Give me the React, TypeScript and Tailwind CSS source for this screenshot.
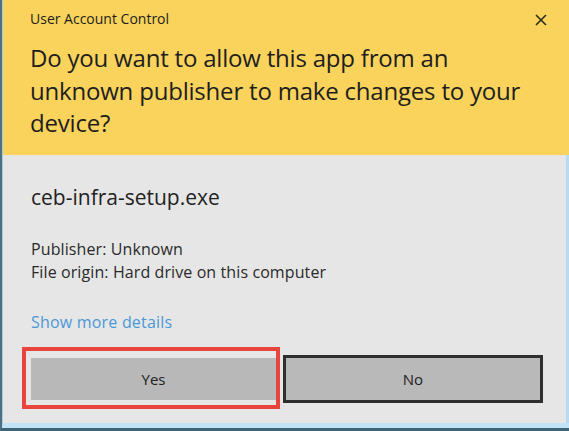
export default function App() {
  return (
    <div className="w-[569px] h-[431px] flex flex-col border-l-2 border-l-[#4d7183] border-b-[3px] border-b-[#3f6475] bg-[#e6e6e6] font-['Open_Sans',sans-serif] text-[#1e1e1e]">
      <div className="flex-1 flex flex-col border-l border-l-[#a8cde6] border-b-[5px] border-b-[#c4e2f6]">
        {/* yellow banner */}
        <div className="h-[155px] shrink-0 bg-[#f9d35b] pl-[27px] pt-[9px] pr-[22px]">
          <div className="flex items-center justify-between h-[20px]">
            <span className="text-[14px] leading-[20px]">User Account Control</span>
            <svg width="12" height="12" viewBox="0 0 12 12" className="mt-[2px]">
              <path d="M1 1L11 11M11 1L1 11" stroke="#2b2b1c" strokeWidth="1.6" />
            </svg>
          </div>
          <p className="mt-[13px] text-[24px] leading-[32.5px] tracking-[-0.2px] w-[510px]">
            Do you want to allow this app from an unknown publisher to make changes to your device?
          </p>
        </div>

        {/* body */}
        <div className="flex-1 pl-[28px] pt-[28px] border-r-[3px] border-r-[#b5daf2]">
          <div className="text-[21px] leading-[28px] text-[#222]">ceb-infra-setup.exe</div>
          <div className="mt-[27px] text-[16px] leading-[23px] tracking-[0.1px] text-[#2a2a2a]">
            <div>Publisher: Unknown</div>
            <div>File origin: Hard drive on this computer</div>
          </div>
          <div className="mt-[27px] text-[16px] leading-[23px] tracking-[0.2px] text-[#4a98d8]">Show more details</div>

          <div className="mt-[21px] flex items-center gap-[7px]">
            <div className="relative">
              <button className="w-[245px] h-[42px] bg-[#b8b8b8] text-[15px] text-[#222]">Yes</button>
              <div className="absolute left-[-9px] top-[-11px] w-[258px] h-[62px] border-4 border-[#e8453c] pointer-events-none" />
            </div>
            <button className="w-[260px] h-[48px] bg-[#b9b9b9] border-[3px] border-[#2e2e2e] text-[15px] text-[#222]">No</button>
          </div>
        </div>
      </div>
    </div>
  );
}
